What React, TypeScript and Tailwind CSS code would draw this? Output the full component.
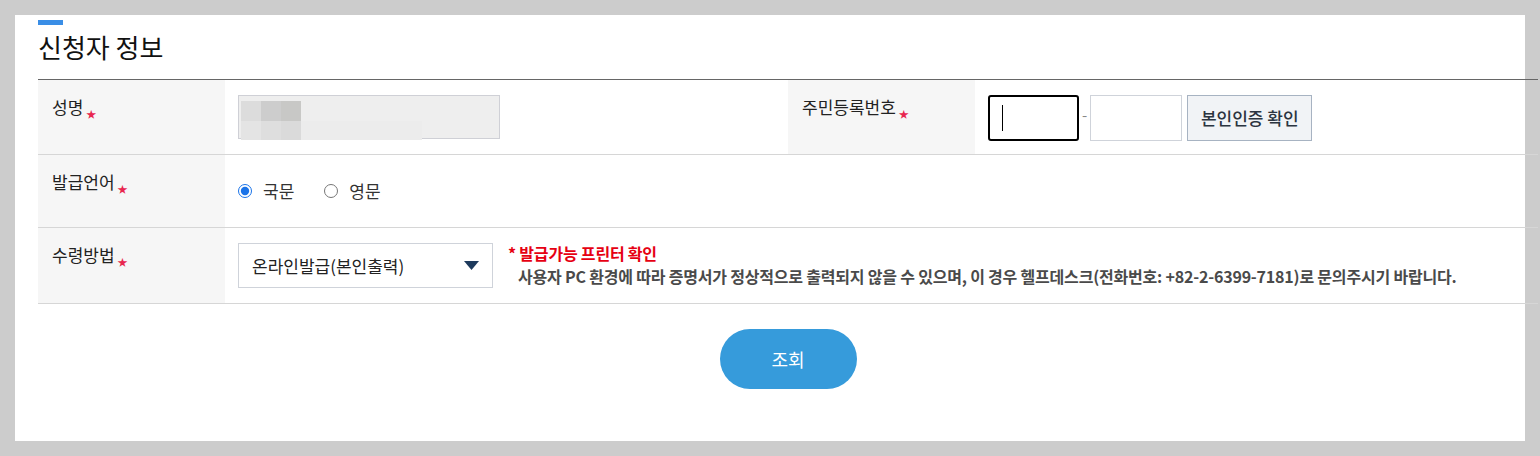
import React from "react";

const Star = () => (
  <span className="ml-[3px] inline-block translate-y-[4px] text-[10px] leading-none text-[#e8264f]">★</span>
);

function Label({ children }: { children: React.ReactNode }) {
  return (
    <div className="bg-[#f6f6f6] pl-[14px] pt-[15px] text-[17px] leading-[24px] text-[#222]">
      {children}
      <Star />
    </div>
  );
}

export default function App() {
  return (
    <div
      className="h-[456px] w-[1540px] overflow-hidden bg-[#cccccc] p-[15px]"
      style={{ fontFamily: '"Noto Sans CJK KR", "Noto Sans", sans-serif' }}
    >
      <div className="h-[426px] w-[1510px] bg-white pl-[23px] pt-[5px]">
        {/* section title */}
        <div className="h-[5px] w-[25px] bg-[#3a8ee6]" />
        <h2 className="mt-[4px] h-[50px] text-[26px] leading-[36px] text-[#111]">신청자 정보</h2>

        <div className="w-[1500px] border-t border-[#666]">
          {/* row 1 */}
          <div className="grid h-[75px] grid-cols-[187px_563px_187px_563px] border-b border-[#d6d6d6]">
            <Label>성명</Label>
            <div className="pl-[13px] pt-[15px]">
              <div className="relative h-[44px] w-[262px] border border-[#cfd0d6] bg-[#eeeeee]">
                <div className="absolute left-[2px] top-[5px] flex">
                  <div className="h-[20px] w-[20px] bg-[#dcdcdc]" />
                  <div className="h-[20px] w-[20px] bg-[#cdcdcd]" />
                  <div className="h-[20px] w-[20px] bg-[#c8c8c6]" />
                </div>
                <div className="absolute left-[2px] top-[25px] flex">
                  <div className="h-[19px] w-[20px] bg-[#e4e4e4]" />
                  <div className="h-[19px] w-[20px] bg-[#dedede]" />
                  <div className="h-[19px] w-[20px] bg-[#dadada]" />
                  <div className="h-[19px] w-[121px] bg-[#ececec]" />
                </div>
              </div>
            </div>
            <Label>주민등록번호</Label>
            <div className="flex items-start pl-[13px] pt-[15px]">
              <div className="relative h-[46px] w-[91px] rounded-[3px] border-2 border-black bg-white">
                <div className="absolute left-[12px] top-[8px] h-[26px] w-px bg-black" />
              </div>
              <span className="mx-[3px] mt-[10px] text-[15px] leading-[20px] text-[#888]">-</span>
              <div className="h-[46px] w-[92px] border border-[#cfd3da] bg-white" />
              <button className="ml-[5px] h-[46px] w-[125px] border border-[#a7b3c2] bg-[#f1f3f6] text-[17px] font-medium leading-[24px] text-[#2b3440]">
                본인인증 확인
              </button>
            </div>
          </div>

          {/* row 2 */}
          <div className="grid h-[73px] grid-cols-[187px_1313px] border-b border-[#d6d6d6]">
            <Label>발급언어</Label>
            <div className="flex items-center pl-[13px] text-[17px] text-[#333]">
              <label className="flex items-center">
                <input type="radio" name="lang" defaultChecked className="m-0 h-[14px] w-[14px] accent-[#1a73e8]" />
                <span className="ml-[11px]">국문</span>
              </label>
              <label className="ml-[30px] flex items-center">
                <input type="radio" name="lang" className="m-0 h-[14px] w-[14px]" />
                <span className="ml-[11px]">영문</span>
              </label>
            </div>
          </div>

          {/* row 3 */}
          <div className="grid h-[76px] grid-cols-[187px_1313px] border-b border-[#d6d6d6]">
            <Label>수령방법</Label>
            <div className="flex items-start pl-[13px] pt-[15px]">
              <div className="flex h-[45px] w-[255px] items-center justify-between border border-[#cfd3da] bg-white pl-[13px] pr-[13px]">
                <span className="text-[17px] text-[#222]">온라인발급(본인출력)</span>
                <svg width="15" height="9" viewBox="0 0 15 9">
                  <path d="M0 0 H15 L7.5 9 Z" fill="#1d3a5c" />
                </svg>
              </div>
              <div className="ml-[15px] mt-[-1px] text-[16px] font-bold leading-[23px] tracking-[-0.2px]">
                <p className="text-[#e60012]">* 발급가능 프린터 확인</p>
                <p className="pl-[10px] text-[#4a4a4a]">
                  사용자 PC 환경에 따라 증명서가 정상적으로 출력되지 않을 수 있으며, 이 경우 헬프데스크(전화번호: +82-2-6399-7181)로 문의주시기 바랍니다.
                </p>
              </div>
            </div>
          </div>
        </div>

        <div className="mt-[25px] flex w-[1500px] justify-center">
          <button className="h-[60px] w-[137px] rounded-full bg-[#369bdb] text-[18px] text-white">조회</button>
        </div>
      </div>
    </div>
  );
}
